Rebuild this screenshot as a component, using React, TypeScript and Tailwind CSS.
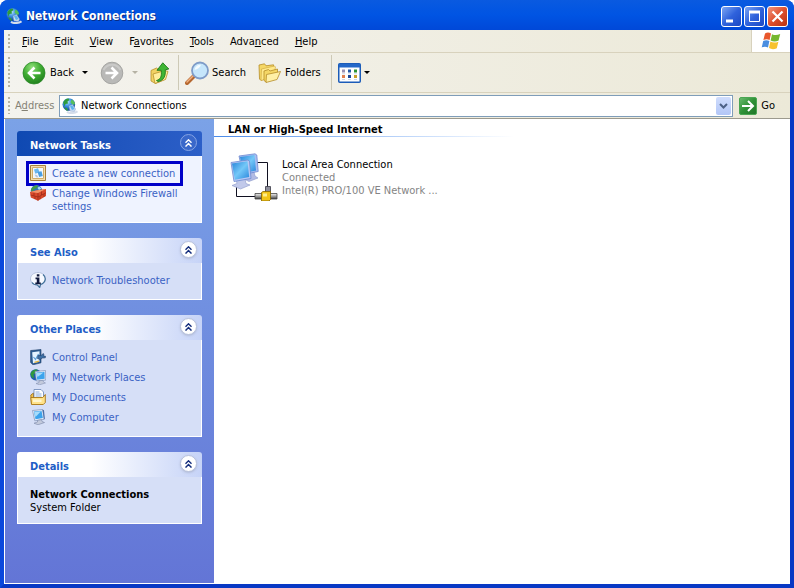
import type { ReactNode } from "react";
import clsx from "clsx";

/* ── Icons ──────────────────────────────────────────────────────────── */

function GlobeIcon({ className = "size-4" }: { className?: string }) {
  return (
    <svg viewBox="0 0 16 16" className={className} aria-hidden="true">
      <defs>
        <radialGradient id="globe" cx="40%" cy="30%" r="75%">
          <stop offset="0" stopColor="#b4e4ff" />
          <stop offset="0.45" stopColor="#3a8ee0" />
          <stop offset="1" stopColor="#0b3a8a" />
        </radialGradient>
      </defs>
      <circle cx="6.800" cy="6.500" r="6.300" fill="url(#globe)" />
      <path d="M1.200 4.500C2.500 1.500 4.500.4 6.500.6L7.500 2 5.500 3.500 6 5.500 3.500 6 2.500 8.500zM2.500 9.500l2.500.5 1 2.500-1 .3C3.800 12 3 11 2.500 9.500z" fill="#2f9a3c" />
      <path d="M9.500 1.500c2 .8 3.300 2.500 3.500 4.500L11 7 8.500 4.500z" fill="#57c05a" />
      <path d="m7 8 3.500-1.500 3 4.500-1 2.500-4.500-.5z" fill="#c9dcf2" stroke="#7f9ac6" strokeWidth="0.500" />
      <path d="m8 8.300 2.200-1 2.400 3.700-2.600.9z" fill="#5cb2ee" />
      <path d="M5 13.800c2 1.800 7 1.800 10.500-.5" stroke="#d5ddea" strokeWidth="2" fill="none" />
    </svg>
  );
}

function ConnectionIcon() {
  return (
    <svg viewBox="0 0 16 16" className="size-4" aria-hidden="true">
      <path d="M.5.500h15v15H.500z" fill="#f3dcae" stroke="#a5803c" />
      <path d="M2.500 2.500h11v11h-11z" fill="#f2f7fd" stroke="#d0ac68" />
      <path d="m4 4.500 4-1.200 1.500 4-4.200 1.500z" fill="#6ab6ee" />
      <path d="m7.500 7 4-.7L12.800 11l-3.600 1z" fill="#4a9ee2" />
      <path d="m4.500 9.500 2.500.5 1.500 2.500-2.500-.3z" fill="#b9c5da" />
    </svg>
  );
}

function FirewallIcon() {
  return (
    <svg viewBox="0 0 16 16" className="size-4" aria-hidden="true">
      <circle cx="6.500" cy="5.800" r="5.800" fill="#2f74b0" />
      <path d="M1 5C2 1.500 5 0 8 .5L7 3 4 4 2.500 7z" fill="#3f9c46" />
      <path d="m9 1.500 2.500 2L9 5 7.500 3z" fill="#a8dcf4" />
      <path d="m0 7 6-1.500L16 4v7l-8 4.800L.8 12.500z" fill="#d8482a" />
      <path d="M6 5.500 16 4 8 8 0 7z" fill="#f29468" />
      <path d="M8 8v7.800M.5 10 8 12l8-4.300M4 7.800v2.900M11.500 6.500V10M14 9v3M5 11.500V14M10 11.200v3" stroke="#8c2413" strokeWidth="0.600" fill="none" />
    </svg>
  );
}

function InfoIcon() {
  return (
    <svg viewBox="0 0 16 16" className="size-4" aria-hidden="true">
      <path d="M8 .5c4.300 0 7.500 2.800 7.500 6.300 0 3-2.200 5.200-5 6L9.500 16 7 13C3.300 12.700.5 10.200.5 6.800.5 3.300 3.700.5 8 .5z" fill="#f6f9ff" stroke="#b4c0dc" />
      <path d="M13 2.500c3.500 3 3 8-2.500 10l-.8 2.800L7.500 13C5 13 3 12 2 10.500" fill="none" stroke="#3f7099" strokeWidth="1.200" />
      <path d="M6.800 2.200h2.600v2.300H6.800zM5.500 5.600h3.900v4.900h1.400v1.700H5.300v-1.700h1.500V7.300H5.500z" fill="#10183c" />
    </svg>
  );
}

function ControlPanelIcon() {
  return (
    <svg viewBox="0 0 16 16" className="size-4" aria-hidden="true">
      <path d="m.6 1.500 10.400-1v13.300L3 15.800.600 13.500z" fill="#2d5d93" stroke="#1c3c66" strokeWidth="0.600" />
      <path d="m2.200 3.200 7.300-.9v10.500l-6.500 1.400z" fill="#e4f3ff" />
      <path d="m3.500 8 2 2.500L8.500 5" stroke="#5b9fd8" strokeWidth="1.200" fill="none" />
      <path d="m8 6.500 3.500-.2 1.500-1.800 1 .8-.6 1.500 2.200.5-.3 1.500-3 .3L10 10.500 7.500 9.500z" fill="#3b6ea5" stroke="#1c3c66" strokeWidth="0.600" />
      <path d="M4.500 13.300 9 12.200" stroke="#e8b53a" strokeWidth="1.300" />
    </svg>
  );
}

function NetworkPlacesIcon() {
  return (
    <svg viewBox="0 0 16 16" className="size-4" aria-hidden="true">
      <circle cx="5.800" cy="5.800" r="5.600" fill="#1f5cab" />
      <path d="M.5 5C1.500 1.500 4.500 0 7.500.6L5.500 4 3.500 5.500 4 9 2 8.500z" fill="#2f9a3c" />
      <path d="m5 2.500 10.500-1 .3 9.500-9.300 1z" fill="#e9f0fb" stroke="#7d8fb5" strokeWidth="0.700" />
      <path d="m6.300 3.600 8.200-.8.200 7-7.500.9z" fill="#3ba3ec" />
      <path d="m6.500 4 7-.6L7.500 8z" fill="#a6dcfb" />
      <path d="m9 11.800 4-.5.500 1.700 2 1-6 1.800L6 14.500l3-1z" fill="#c3cadc" stroke="#7987a8" strokeWidth="0.500" />
    </svg>
  );
}

function DocumentsIcon() {
  return (
    <svg viewBox="0 0 16 16" className="size-4" aria-hidden="true">
      <path d="M.8 6 3.500 4v8l-2 3z" fill="#f0c04a" stroke="#a87614" strokeWidth="0.900" />
      <path d="M4 .5h7L13.500 3v9H4z" fill="#fff" stroke="#6683b5" strokeWidth="0.800" />
      <path d="M5.500 3h4M5.500 5h6M5.500 7h6" stroke="#7ba2d8" strokeWidth="0.900" />
      <path d="M.8 8.500h12l2.500-3v8l-2 2H1.500z" fill="#ffe28a" stroke="#a87614" strokeWidth="0.900" />
      <path d="M3 10.500h8.500v2.500H3z" fill="#fff6cf" />
    </svg>
  );
}

function ComputerIcon() {
  return (
    <svg viewBox="0 0 16 16" className="size-4" aria-hidden="true">
      <path d="m2.500 1.500 10-1 1.800 9.800-9.500 1.500z" fill="#e9f0fb" stroke="#7d8fb5" strokeWidth="0.700" />
      <path d="m3.800 2.500 7.700-.8L12.900 9l-7.400 1.300z" fill="#3ba3ec" />
      <path d="m4.200 3 6.800-.7L5.500 8z" fill="#a6dcfb" />
      <path d="m12.500.5 1.500.8.800 8.500-.9.500z" fill="#4a6ea8" />
      <path d="m7.500 11.300 4-.6.500 1.800 2.500 1-6.500 2.300-4-1.600 3.500-1.200z" fill="#c3cadc" stroke="#7987a8" strokeWidth="0.600" />
    </svg>
  );
}

function LanIcon() {
  return (
    <svg viewBox="0 0 48 48" className="size-12 shrink-0" aria-hidden="true">
      <defs>
        <linearGradient id="screen" x1="0" y1="0" x2="1" y2="1">
          <stop offset="0" stopColor="#2583d8" />
          <stop offset="0.500" stopColor="#74c8f8" />
          <stop offset="1" stopColor="#2a86dc" />
        </linearGradient>
        <linearGradient id="pipe" x1="0" y1="0" x2="0" y2="1">
          <stop offset="0" stopColor="#f4f4f4" />
          <stop offset="0.500" stopColor="#a0a0a0" />
          <stop offset="1" stopColor="#3c3c3c" />
        </linearGradient>
      </defs>
      <path d="M26 9.500h11.500V34M6.500 34v9.500H25" stroke="#101020" fill="none" />
      <path d="M17 19h7l1 4 3 2-9 3.500-5-2.500z" fill="#b2bbe4" stroke="#8b98c9" strokeWidth="0.600" />
      <path d="m9 3 16-2.200L26.800 2l1.400 16.500L13 21.500z" fill="#a9bdf0" stroke="#6f8ad0" strokeWidth="0.800" />
      <path d="m10 4 14.500-2L26 17.500 13.500 20z" fill="url(#screen)" />
      <path d="M6 26h9l1 4.500 4 1.500-9.500 4L2 32.500l5-2z" fill="#c1c9ea" stroke="#8b98c9" strokeWidth="0.600" />
      <path d="m1 9.500 17-2.500 1.500 1.200L21 25.500 4 28.500z" fill="#b9c9f4" stroke="#6f8ad0" strokeWidth="0.800" />
      <path d="m2 10.500 15.500-2.300L19.200 24 4.800 26.700z" fill="url(#screen)" />
      <path d="M35.500 33.500h5v6h-5z" fill="#8f8f9c" stroke="#3a3a46" strokeWidth="0.800" />
      <path d="M25 40.500h7V46h-7zM40 40.500h7V46h-7z" fill="url(#pipe)" stroke="#444" strokeWidth="0.800" />
      <path d="m31.500 39.500 1.500-1h7.500v8l-1.500 1.500h-7.500z" fill="#f3c417" stroke="#866600" strokeWidth="0.800" />
      <path d="M33 40.500h4v3h-4z" fill="#ffee8c" />
    </svg>
  );
}

function BackIcon() {
  return (
    <svg viewBox="0 0 24 24" className="size-6" aria-hidden="true">
      <defs>
        <radialGradient id="back" cx="40%" cy="25%" r="80%">
          <stop offset="0" stopColor="#8fe07a" />
          <stop offset="0.500" stopColor="#3fac32" />
          <stop offset="1" stopColor="#1f7d1c" />
        </radialGradient>
      </defs>
      <circle cx="12" cy="12" r="11" fill="url(#back)" stroke="#2c8a28" strokeWidth="0.800" />
      <path d="M18.500 12H7M12.500 6.500 7 12l5.500 5.500" stroke="#fff" strokeWidth="2.600" fill="none" />
    </svg>
  );
}

function ForwardIcon() {
  return (
    <svg viewBox="0 0 24 24" className="size-6" aria-hidden="true">
      <circle cx="12" cy="12" r="10.800" fill="#b9b9b7" stroke="#a5a5a2" />
      <path d="M3.500 9a9.500 9.500 0 0 1 17 0" stroke="#cacac8" strokeWidth="2" fill="none" />
      <path d="M5.500 12H17M11.500 6.500 17 12l-5.500 5.500" stroke="#fff" strokeWidth="2.600" fill="none" />
    </svg>
  );
}

function UpIcon() {
  return (
    <svg viewBox="0 0 20 22" className="h-[22px] w-5" aria-hidden="true">
      <path d="M1 8.500 6.500 6l2 1.500L14 5l1.500 12-10 4.500L1 19z" fill="#f1d264" stroke="#b8922c" strokeWidth="0.800" />
      <path d="m3 12 12-3.500 3 1-2.500 8-10.500 4z" fill="#ffee9c" stroke="#b8922c" strokeWidth="0.800" />
      <path d="M6.500 18.500c4-1 5.500-4 4.700-10.200H7L12.800.8 18.800 7l-3.600.8c.8 6.200-1.700 11-7.200 11.700z" fill="#3fb534" stroke="#1e7a1b" strokeWidth="0.900" />
    </svg>
  );
}

function SearchIcon() {
  return (
    <svg viewBox="0 0 24 24" className="size-6" aria-hidden="true">
      <path d="M2 22 9 15" stroke="#b5672f" strokeWidth="4" strokeLinecap="round" />
      <path d="m2 21 6.500-6.500" stroke="#f0b080" strokeWidth="1.500" strokeLinecap="round" />
      <circle cx="15" cy="9.500" r="8" fill="#c6e6fb" stroke="#7f9cc8" strokeWidth="1.800" />
      <path d="M9.500 9c.5-3.500 3-5.500 6.500-5.300-1 2.800-3.500 4.500-6.500 5.300z" fill="#f4fbff" />
    </svg>
  );
}

function FoldersIcon() {
  return (
    <svg viewBox="0 0 24 20" className="h-5 w-6" aria-hidden="true">
      <path d="M1 2 6.500.8l1.500 2 7.500-1L16 12 3 17.500 1.500 16z" fill="#f5d765" stroke="#b58d28" strokeWidth="0.800" />
      <path d="m3.500 6 13-3 1 1-2 10L3 17.500z" fill="#ffe98a" stroke="#c9a23c" strokeWidth="0.600" />
      <path d="m6 8 4.500-1.500L12 8l7.500-2v8L8 19l-2-1.500z" fill="#f5d765" stroke="#b58d28" strokeWidth="0.800" />
      <path d="m8.500 11.500 14-3-3.500 8-11 3z" fill="#fff0a6" stroke="#b58d28" strokeWidth="0.800" />
    </svg>
  );
}

function ViewsIcon() {
  return (
    <svg viewBox="0 0 23 20" className="h-5 w-[23px]" aria-hidden="true">
      <rect x="0.750" y="0.750" width="21.500" height="18.500" rx="1" fill="#fff" stroke="#1c5cb8" strokeWidth="1.500" />
      <path d="M1 1h21v3.500H1z" fill="#2468c8" />
      <path d="M4 6.500h3v3H4z" fill="#9a92b4" />
      <path d="M10 6.500h3v3h-3z" fill="#2358a8" />
      <path d="M16 6.500h3v3h-3z" fill="#2c9434" />
      <path d="M4 12h3v3H4z" fill="#e08050" />
      <path d="M10 12h3v3h-3z" fill="#1c4898" />
      <path d="M16 12h3v3h-3z" fill="#c8a028" />
      <path d="M4 10.800h3M10 10.800h3M16 10.800h3M4 16.500h3M10 16.500h3M16 16.500h3" stroke="#b8c4dc" strokeWidth="0.700" />
    </svg>
  );
}

function GoIcon() {
  return (
    <svg viewBox="0 0 18 18" className="size-[18px]" aria-hidden="true">
      <defs>
        <linearGradient id="go" x1="0" y1="0" x2="1" y2="1">
          <stop offset="0" stopColor="#6cbc70" />
          <stop offset="0.500" stopColor="#2f9136" />
          <stop offset="1" stopColor="#1f7426" />
        </linearGradient>
      </defs>
      <rect x="0.500" y="0.500" width="17" height="17" rx="1.500" fill="url(#go)" stroke="#4aa552" />
      <path d="M3 9h11M9 4l5 5-5 5" stroke="#fff" strokeWidth="2" fill="none" />
    </svg>
  );
}

function WindowsFlag() {
  return (
    <svg viewBox="0 0 20 18" className="h-[18px] w-5" aria-hidden="true">
      <path d="M4 1.500C6 .3 8 .3 10 1.500L8.600 8C6.600 6.900 4.500 7 2.400 8z" fill="#e8572c" />
      <path d="M11 2.200c2.500 1.200 5 1.300 8.200-.2L17.600 8.600c-2.800 1.200-5.500 1.200-8-.2z" fill="#76b82e" />
      <path d="M2.200 9c2.200-1 4.200-1 6.200.1L7 15.500C5 14.400 3 14.400.700 15.500z" fill="#4a8ee0" />
      <path d="M9.400 9.600c2.500 1.300 5 1.300 8 .1l-1.600 6.600c-2.800 1.200-5.300 1.200-7.800-.2z" fill="#f7c22e" />
    </svg>
  );
}

function Caret({ className }: { className?: string }) {
  return (
    <svg viewBox="0 0 6 3" className={clsx("h-[3px] w-1.5", className)} fill="currentColor" aria-hidden="true">
      <path d="M0 0h6L3 3z" />
    </svg>
  );
}

/* ── Window chrome ──────────────────────────────────────────────────── */

function CaptionButton({ label, close, children }: { label: string; close?: boolean; children: ReactNode }) {
  return (
    <button
      type="button"
      aria-label={label}
      className={clsx(
        "size-[21px] rounded-[3px] border border-white bg-linear-to-br",
        close ? "from-[#f0927a] via-[#de4f2c] to-[#b8320f]" : "from-[#7da4f2] via-[#2f62dc] to-[#1b48c4]",
      )}
    >
      <svg viewBox="0 0 19 19" className="size-full" fill="none" stroke="#fff" aria-hidden="true">
        {children}
      </svg>
    </button>
  );
}

function TitleBar() {
  return (
    <header className="flex h-[30px] items-center gap-1 bg-linear-to-b from-[#0a5ae0] via-[#0054e3] to-[#0048d8] px-1.5 pt-0.5">
      <GlobeIcon />
      <h1 className="flex-1 text-[12px] font-bold text-white [text-shadow:1px_1px_#0a2a80]">Network Connections</h1>
      <div className="flex gap-0.5">
        <CaptionButton label="Minimize">
          <path d="M4 14h7" strokeWidth="3" />
        </CaptionButton>
        <CaptionButton label="Maximize">
          <path d="M4.500 5v9.500h10V5" />
          <path d="M4 5h11" strokeWidth="3" />
        </CaptionButton>
        <CaptionButton label="Close" close>
          <path d="m4.500 4.500 10 10m0-10-10 10" strokeWidth="2.200" />
        </CaptionButton>
      </div>
    </header>
  );
}

function Grip() {
  return <span className="my-1 ml-1 w-0.5 shrink-0 self-stretch bg-[repeating-linear-gradient(#b8b4a2_0_2px,transparent_2px_4px)]" />;
}

/* [before, access key, after] */
const menus = [
  ["", "F", "ile"],
  ["", "E", "dit"],
  ["", "V", "iew"],
  ["F", "a", "vorites"],
  ["", "T", "ools"],
  ["Adva", "n", "ced"],
  ["", "H", "elp"],
];

function MenuBar() {
  return (
    <nav className="flex h-[23px] border-b border-[#d8d2bd] bg-linear-to-r from-[#f4f3ee] to-[#ece9d8]">
      <Grip />
      <div className="flex flex-1 items-center pl-1">
        {menus.map(([before, key, after]) => (
          <button key={key} type="button" className="px-2">
            {before}
            <span className="underline">{key}</span>
            {after}
          </button>
        ))}
      </div>
      <div className="flex w-[39px] items-center justify-center border-l border-[#d8d2bd] bg-white">
        <WindowsFlag />
      </div>
    </nav>
  );
}

function Divider() {
  return <span className="my-0.5 w-px self-stretch bg-[#cdc9b6]" />;
}

function ToolBar() {
  return (
    <div className="flex h-10 items-center border-b border-[#d8d2bd] bg-linear-to-r from-[#f4f3ee] to-[#ece9d8]">
      <Grip />
      <button type="button" className="ml-3 flex items-center gap-1">
        <BackIcon />
        Back
      </button>
      <button type="button" aria-label="Back history" className="px-2">
        <Caret />
      </button>
      <button type="button" aria-label="Forward" className="ml-1">
        <ForwardIcon />
      </button>
      <button type="button" aria-label="Forward history" className="px-2 text-[#b5b2a4]">
        <Caret />
      </button>
      <button type="button" aria-label="Up" className="mr-2 ml-1">
        <UpIcon />
      </button>
      <Divider />
      <button type="button" className="ml-1.5 flex items-center gap-[3px]">
        <SearchIcon />
        Search
      </button>
      <button type="button" className="ml-3 flex items-center gap-[3px]">
        <FoldersIcon />
        Folders
      </button>
      <span className="w-2.5" />
      <Divider />
      <button type="button" aria-label="Views" className="ml-1.5 flex items-center gap-[3px]">
        <ViewsIcon />
        <Caret />
      </button>
    </div>
  );
}

function AddressBar() {
  return (
    <div className="flex h-[26px] items-center border-b border-[#9c9a8e] bg-linear-to-r from-[#f4f3ee] to-[#ece9d8]">
      <Grip />
      <label htmlFor="address" className="w-[49px] pl-[5px] text-[#858275]">
        A<span className="underline">d</span>dress
      </label>
      <div className="flex h-[22px] flex-1 items-center border border-[#7f9db9] bg-white pr-px pl-0.5">
        <GlobeIcon />
        <input id="address" defaultValue="Network Connections" className="min-w-0 flex-1 pl-[3px] outline-none" />
        <button type="button" aria-label="Show addresses" className="flex h-[18px] w-[15px] items-center justify-center rounded-[2px] bg-linear-to-b from-[#d0ddfc] to-[#b2c6f7]">
          <svg viewBox="0 0 9 6" className="h-1.5 w-[9px]" fill="none" stroke="#4d6185" strokeWidth="2" aria-hidden="true">
            <path d="m1 1 3.500 3.500L8 1" />
          </svg>
        </button>
      </div>
      <button type="button" className="mr-[15px] ml-1.5 flex items-center gap-1">
        <GoIcon />
        Go
      </button>
    </div>
  );
}

/* ── Task pane ──────────────────────────────────────────────────────── */

interface PanelProps {
  title: string;
  primary?: boolean;
  children: ReactNode;
}

function Panel({ title, primary, children }: PanelProps) {
  return (
    <section>
      <div
        className={clsx(
          "flex h-[25px] items-center justify-between rounded-t-[3px] bg-linear-to-r pr-[5px] pl-[13px]",
          primary ? "from-[#0f49b2] to-[#2c5fc8] text-white" : "from-white from-40% to-[#c6d3f7] text-[#215dc6]",
        )}
      >
        <h2 className="pt-[3px] font-bold">{title}</h2>
        <button
          type="button"
          aria-label={`Collapse ${title}`}
          className={clsx(
            "mb-0.5 flex size-[17px] items-center justify-center rounded-full border",
            primary ? "border-[#86a4e4] bg-[#3a68ca] text-white" : "border-[#b8c2dc] bg-white text-[#122c7c] shadow-sm",
          )}
        >
          <svg viewBox="0 0 7 8" className="h-2 w-[7px]" fill="none" stroke="currentColor" strokeWidth="1.400" aria-hidden="true">
            <path d="m.5 3.800 3-3 3 3M.500 7.600l3-3 3 3" />
          </svg>
        </button>
      </div>
      <div className={clsx("border border-t-0 border-white px-3 pt-[9px]", primary ? "bg-[#eff3ff] pb-[9px]" : "bg-[#d6dff7] pb-[11px]")}>
        {children}
      </div>
    </section>
  );
}

function TaskLink({ icon, marked, children }: { icon: ReactNode; marked?: boolean; children: ReactNode }) {
  return (
    <li className="relative w-fit">
      <a href="#" className="flex items-start gap-1.5 text-[#3a62c4]">
        <span className="shrink-0">{icon}</span>
        <span className="pt-0.5">{children}</span>
      </a>
      {marked && <span className="pointer-events-none absolute -top-1 -right-2 -bottom-[5px] -left-1 border-3 border-[#0000c8]" />}
    </li>
  );
}

function TaskPane() {
  return (
    <aside className="flex w-[210px] shrink-0 flex-col gap-[15px] border-b border-l border-white bg-linear-to-b from-[#7ba2e7] to-[#6375d6] px-3 pt-3">
      <Panel title="Network Tasks" primary>
        <ul className="flex flex-col gap-1">
          <TaskLink icon={<ConnectionIcon />} marked>
            Create a new connection
          </TaskLink>
          <TaskLink icon={<FirewallIcon />}>Change Windows Firewall settings</TaskLink>
        </ul>
      </Panel>
      <Panel title="See Also">
        <ul>
          <TaskLink icon={<InfoIcon />}>Network Troubleshooter</TaskLink>
        </ul>
      </Panel>
      <Panel title="Other Places">
        <ul className="flex flex-col gap-1">
          <TaskLink icon={<ControlPanelIcon />}>Control Panel</TaskLink>
          <TaskLink icon={<NetworkPlacesIcon />}>My Network Places</TaskLink>
          <TaskLink icon={<DocumentsIcon />}>My Documents</TaskLink>
          <TaskLink icon={<ComputerIcon />}>My Computer</TaskLink>
        </ul>
      </Panel>
      <Panel title="Details">
        <div className="-mb-0.5 pt-0.5">
          <p className="font-bold">Network Connections</p>
          <p>System Folder</p>
        </div>
      </Panel>
    </aside>
  );
}

/* ── Connection list ────────────────────────────────────────────────── */

function Connections() {
  return (
    <main className="min-w-0 flex-1 bg-white">
      <h2 className="pt-1 pl-3.5 font-bold">LAN or High-Speed Internet</h2>
      <div className="h-px w-[300px] bg-linear-to-r from-[#4a8ae8] to-white" />
      <div className="mt-4 ml-4 flex gap-1">
        <LanIcon />
        <div className="pt-[5px] text-[#848484]">
          <p className="text-black">Local Area Connection</p>
          <p>Connected</p>
          <p>Intel(R) PRO/100 VE Network ...</p>
        </div>
      </div>
    </main>
  );
}

export default function App() {
  return (
    <div className="flex min-h-screen flex-col overflow-hidden rounded-t-lg bg-[#0a48dc] font-['DejaVu_Sans_Condensed','Noto_Sans',sans-serif] text-[11px] leading-[13px] text-black">
      <TitleBar />
      <div className="flex flex-1 flex-col border-4 border-t-0 border-[#0a48dc] border-r-[#0838c4] border-b-[#0838c4]">
        <MenuBar />
        <ToolBar />
        <AddressBar />
        <div className="flex flex-1">
          <TaskPane />
          <Connections />
        </div>
      </div>
    </div>
  );
}
